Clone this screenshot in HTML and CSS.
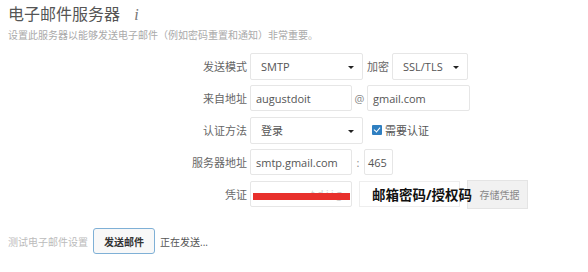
FILE: index.html
```html
<!DOCTYPE html>
<html lang="zh-CN">
<head>
    <meta charset="UTF-8">
    <meta name="viewport" content="width=device-width, initial-scale=1.0">
    <title>电子邮件服务器</title>
    <link rel="stylesheet" href="styles.css">
</head>
<body>
    <h2 class="title">电子邮件服务器 <span class="info">i</span></h2>
    <p class="desc">设置此服务器以能够发送电子邮件（例如密码重置和通知）非常重要。</p>

    <div class="form">
        <div class="form-row">
            <label class="label">发送模式</label>
            <div class="select select-wide">SMTP<span class="caret"></span></div>
            <span class="sep-label">加密</span>
            <div class="select select-small">SSL/TLS<span class="caret"></span></div>
        </div>
        <div class="form-row">
            <label class="label">来自地址</label>
            <div class="input input-mid">augustdoit</div>
            <span class="sep">@</span>
            <div class="input input-domain">gmail.com</div>
        </div>
        <div class="form-row">
            <label class="label">认证方法</label>
            <div class="select select-wide">登录<span class="caret"></span></div>
            <label class="check"><span class="checkbox"></span>需要认证</label>
        </div>
        <div class="form-row">
            <label class="label">服务器地址</label>
            <div class="input input-mid">smtp.gmail.com</div>
            <span class="sep sep-colon">:</span>
            <div class="input input-port">465</div>
        </div>
        <div class="form-row">
            <label class="label">凭证</label>
            <div class="input input-mid credential">
                <span class="faint">t.d.i.i.g</span>
                <span class="redact"></span>
            </div>
            <div class="note"><span class="note-text">邮箱密码/授权码</span></div>
            <button class="btn-store">存储凭据</button>
        </div>
    </div>

    <div class="test-row">
        <span class="test-label">测试电子邮件设置</span>
        <button class="btn-send">发送邮件</button>
        <span class="status">正在发送...</span>
    </div>
</body>
</html>
```

FILE: styles.css
```css
body {
    font-family: "Open Sans", "Noto Sans CJK SC", sans-serif;
    margin: 0;
    padding: 0 8px;
    color: #555;
    background: #fff;
}
.title {
    font-size: 16px;
    font-weight: normal;
    color: #555;
    margin: 4px 0 0;
    line-height: 20px;
}
.info {
    font-family: "Liberation Serif", serif;
    font-style: italic;
    color: #777;
    margin-left: 10px;
}
.desc {
    font-size: 10px;
    color: #aaa;
    margin: 3px 0 0;
    line-height: 14px;
}
.form {
    margin-top: 11px;
}
.form-row {
    display: flex;
    align-items: center;
    height: 26px;
    margin-bottom: 6px;
}
.label {
    width: 242px;
    box-sizing: border-box;
    padding-right: 3px;
    text-align: right;
    font-size: 11px;
    color: #666;
}
.select,
.input {
    box-sizing: border-box;
    height: 26px;
    border: 1px solid #e6e6e6;
    border-radius: 2px;
    font-size: 11px;
    color: #555;
    display: flex;
    align-items: center;
    background: #fff;
}
.select {
    position: relative;
    padding-left: 10px;
    height: 27px;
}
.caret {
    position: absolute;
    right: 8px;
    top: 12px;
    border-left: 3px solid transparent;
    border-right: 3px solid transparent;
    border-top: 3px solid #222;
}
.select-wide {
    width: 113px;
}
.select-small {
    width: 76px;
}
.sep-label {
    font-size: 11px;
    color: #666;
    margin: 0 3px 0 4px;
}
.input {
    padding-left: 5px;
}
.input-mid {
    width: 102px;
}
.input-domain {
    width: 103px;
}
.input-port {
    width: 29px;
    padding-left: 3px;
}
.sep {
    font-size: 11px;
    color: #888;
    width: 15px;
    text-align: center;
}
.sep-colon {
    width: 12px;
}
.check {
    display: flex;
    align-items: center;
    margin-left: 9px;
    font-size: 11px;
    color: #555;
}
.checkbox {
    width: 10px;
    height: 10px;
    box-sizing: border-box;
    background: #2f7fc1;
    border-radius: 1px;
    margin-right: 3px;
    position: relative;
}
.checkbox::after {
    content: "";
    position: absolute;
    left: 3px;
    top: 1px;
    width: 3px;
    height: 5px;
    border-right: 1.5px solid #fff;
    border-bottom: 1.5px solid #fff;
    transform: rotate(40deg);
}
.credential {
    position: relative;
    overflow: hidden;
    color: #ccc;
}
.faint {
    padding-left: 55px;
    font-size: 10px;
    white-space: nowrap;
}
.redact {
    position: absolute;
    left: 2px;
    right: 1px;
    top: 11px;
    height: 7px;
    background: #e8302c;
}
.note {
    position: relative;
    z-index: 1;
    box-sizing: border-box;
    width: 101px;
    height: 26px;
    margin-left: 7px;
    border: 1px solid #eee;
    background: #fff;
    display: flex;
    align-items: center;
    white-space: nowrap;
}
.note-text {
    margin-left: 12px;
    font-size: 13.5px;
    font-weight: bold;
    color: #111;
}
.btn-store {
    box-sizing: border-box;
    width: 61px;
    height: 29px;
    margin-left: 7px;
    border: 1px solid #e4e4e4;
    background: #f1f1f1;
    color: #888;
    font-family: inherit;
    font-size: 10px;
    padding: 0 0 0 4px;
}
.test-row {
    display: flex;
    align-items: center;
    margin-top: 21px;
}
.test-label {
    font-size: 10px;
    color: #bbb;
    width: 85px;
}
.btn-send {
    box-sizing: border-box;
    width: 62px;
    height: 26px;
    border: 1px solid #7fb0d6;
    border-radius: 3px;
    background: #f8f8f8;
    color: #333;
    font-family: inherit;
    font-size: 10px;
    font-weight: bold;
    padding: 0;
}
.status {
    font-size: 10px;
    color: #555;
    margin-left: 5px;
}
```
